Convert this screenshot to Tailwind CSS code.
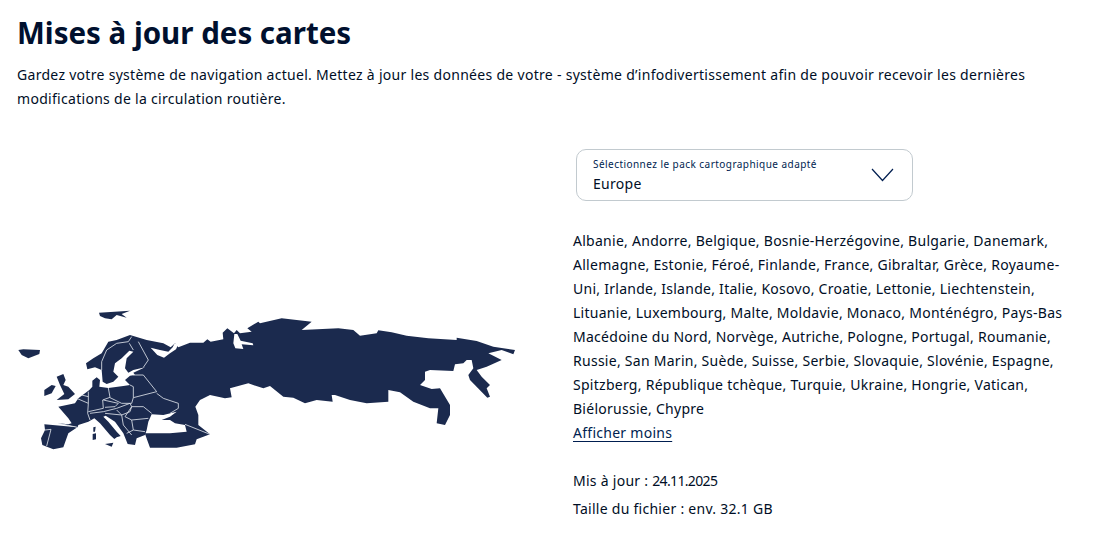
<!DOCTYPE html>
<html lang="fr"><head><meta charset="utf-8">
<script src="https://cdn.jsdelivr.net/npm/@tailwindcss/browser@4"></script>
<title>Mises à jour des cartes</title></head>
<body class="bg-white">
<main class="w-[1093px] h-[546px] overflow-hidden px-[17px] text-[#000e26] font-['Noto_Sans','Liberation_Sans',sans-serif]">
<h1 class="pt-[14px] text-[29.5px] leading-[38px] font-bold text-[#00102e]">Mises à jour des cartes</h1>
<p class="mt-[11px] text-[14px] leading-[24px] tracking-[0.295px] whitespace-nowrap">Gardez votre système de navigation actuel. Mettez à jour les données de votre - système d’infodivertissement afin de pouvoir recevoir les dernières<br>modifications de la circulation routière.</p>
<div class="flex mt-[38px]">
<div class="w-[556px] pt-[156px] shrink-0">
<svg class="block w-[499px] h-[146px]" viewBox="51 45 1497 438" fill="#1b2a4e">
<path d="M133 403L175 400L233 412L235 405L265 395L283 385L300 400L330 435L343 447L350 442L362 438L350 425L325 395L310 380L317 377L345 395L370 430L383 462L405 465L410 445L435 435L440 420L445 395L455 373L490 375L530 365L510 380L485 390L510 390L525 400L555 405L560 425L510 430L435 430L438 440L450 473L530 473L585 463L590 448L610 440L630 433L595 405L595 375L586 350L600 330L630 315L675 325L695 322L690 295L745 280L790 295L810 288L850 320L880 323L915 340L950 330L998 335L995 315L1005 315L1050 330L1100 340L1165 335L1165 300L1200 307L1240 335L1290 355L1315 355L1310 400L1335 405L1350 375L1350 345L1320 295L1295 297L1260 285L1275 270L1275 245L1290 240L1360 243L1365 223L1390 220L1400 210L1415 210L1420 235L1405 255L1410 270L1462 323L1470 320L1460 295L1470 285L1445 260L1430 240L1460 230L1505 210L1465 190L1505 180L1540 193L1545 180L1480 170L1430 153L1370 143L1370 150L1285 145L1220 137L1175 127L1135 121L1130 130L1080 137L1060 120L1015 115L905 120L935 95L845 85L780 100L775 95L742 115L755 125L720 130L710 120L702 130L682 115L668 128L670 148L632 155L622 148L610 158L570 158L535 172L525 160L512 172L490 160L440 150L390 135L350 150L325 155L305 190L280 205L258 220L262 238L285 232L305 240L308 275L320 282L340 275L355 260L340 245L345 220L365 205L388 182L400 185L380 205L375 235L385 248L400 240L435 232L400 248L405 255L390 257L375 270L390 285L370 288L325 294L298 290L300 270L290 262L277 272L277 290L268 300L235 325L225 340L175 350L205 385L215 400L205 403L175 400Z"/>
<path d="M133 403L232 412L205 430L190 472L160 478L127 465L123 445L135 420Z"/>
<path d="M55 180L70 178L120 180L118 192L85 205L65 195Z"/>
<path d="M297 68L390 62L365 72L380 83L350 75L335 88L315 85L300 78Z"/>
<path d="M170 260L190 252L197 270L190 285L205 290L225 312L205 328L170 330L193 312L180 285Z"/>
<path d="M133 300L155 285L167 288L155 310L133 318Z"/>
<path d="M315 462L340 458L335 470Z"/>
<path d="M278 432L288 430L288 448L278 450Z"/>
<path d="M280 412L287 410L285 425L280 425Z"/>
<path fill="#fff" d="M452 173L480 180L505 185L518 172L524 160L534 165L528 178L510 190L492 203L472 195Z"/>
<path fill="#fff" d="M703 132L712 132L722 152L758 160L760 166L725 163L730 177L706 175L700 160Z"/>
<g fill="none" stroke="#dfe3ea" stroke-width="2.500" stroke-linejoin="round">
<path d="M305 240L305 215L320 180L350 160L385 155L395 140M388 160L400 180M415 155L445 210L430 232"/>
<path d="M400 255L430 255L470 305L400 323L400 290L390 285"/>
<path d="M470 310L490 325L535 340L535 355L510 370"/>
<path d="M395 350L430 350L455 370"/>
<path d="M230 325L265 340L263 370L270 390M265 340L265 305M245 315L265 320"/>
<path d="M265 365L310 355L308 330L330 322L325 294"/>
<path d="M310 330L355 340L345 350L315 352"/>
<path d="M330 323L365 340L395 340L400 323"/>
<path d="M270 370L310 365L350 355L390 340"/>
<path d="M350 360L365 375L390 365L395 350L390 340"/>
<path d="M315 370L365 375L370 405L395 435"/>
<path d="M395 350L375 380L395 390L445 385M395 390L400 420L435 425M400 420L380 430"/>
<path d="M135 420L153 418L140 468M175 400L233 412"/>
<path d="M555 403L630 433"/>
</g>
</svg>
</div>
<div class="w-[505px]">
<div class="ml-[3px] w-[337px] h-[52px] rounded-[10px] border border-[#c2cacf] pl-[16px] pr-[18px] flex items-center justify-between">
<div>
<p class="text-[10px] leading-[14px] tracking-[0.45px] text-[#001e50]">Sélectionnez le pack cartographique adapté</p>
<p class="text-[14px] leading-[20px] tracking-[0.3px] mt-[3px]">Europe</p>
</div>
<svg class="w-[23px] h-[14px]" viewBox="0 0 23 14" fill="none" stroke="#001e50" stroke-width="1.2"><path d="M1 1L11.500 12.500L22 1"/></svg>
</div>
<div class="text-[14px] leading-[24px] tracking-[0.27px]">
<p class="mt-[28px] whitespace-nowrap">Albanie, Andorre, Belgique, Bosnie-Herzégovine, Bulgarie, Danemark,<br>Allemagne, Estonie, Féroé, Finlande, France, Gibraltar, Grèce, Royaume-<br>Uni, Irlande, Islande, Italie, Kosovo, Croatie, Lettonie, Liechtenstein,<br>Lituanie, Luxembourg, Malte, Moldavie, Monaco, Monténégro, Pays-Bas<br>Macédoine du Nord, Norvège, Autriche, Pologne, Portugal, Roumanie,<br>Russie, San Marin, Suède, Suisse, Serbie, Slovaquie, Slovénie, Espagne,<br>Spitzberg, République tchèque, Turquie, Ukraine, Hongrie, Vatican,<br>Biélorussie, Chypre</p>
<a class="block text-[#001e50] underline underline-offset-[3px]" href="#">Afficher moins</a>
<p class="mt-[24px]">Mis à jour : <span class="tracking-[-0.65px]">24.11.2025</span></p>
<p class="mt-[4px]">Taille du fichier : env. 32.1 GB</p>
</div>
</div>
</div>
</main>
</body></html>
